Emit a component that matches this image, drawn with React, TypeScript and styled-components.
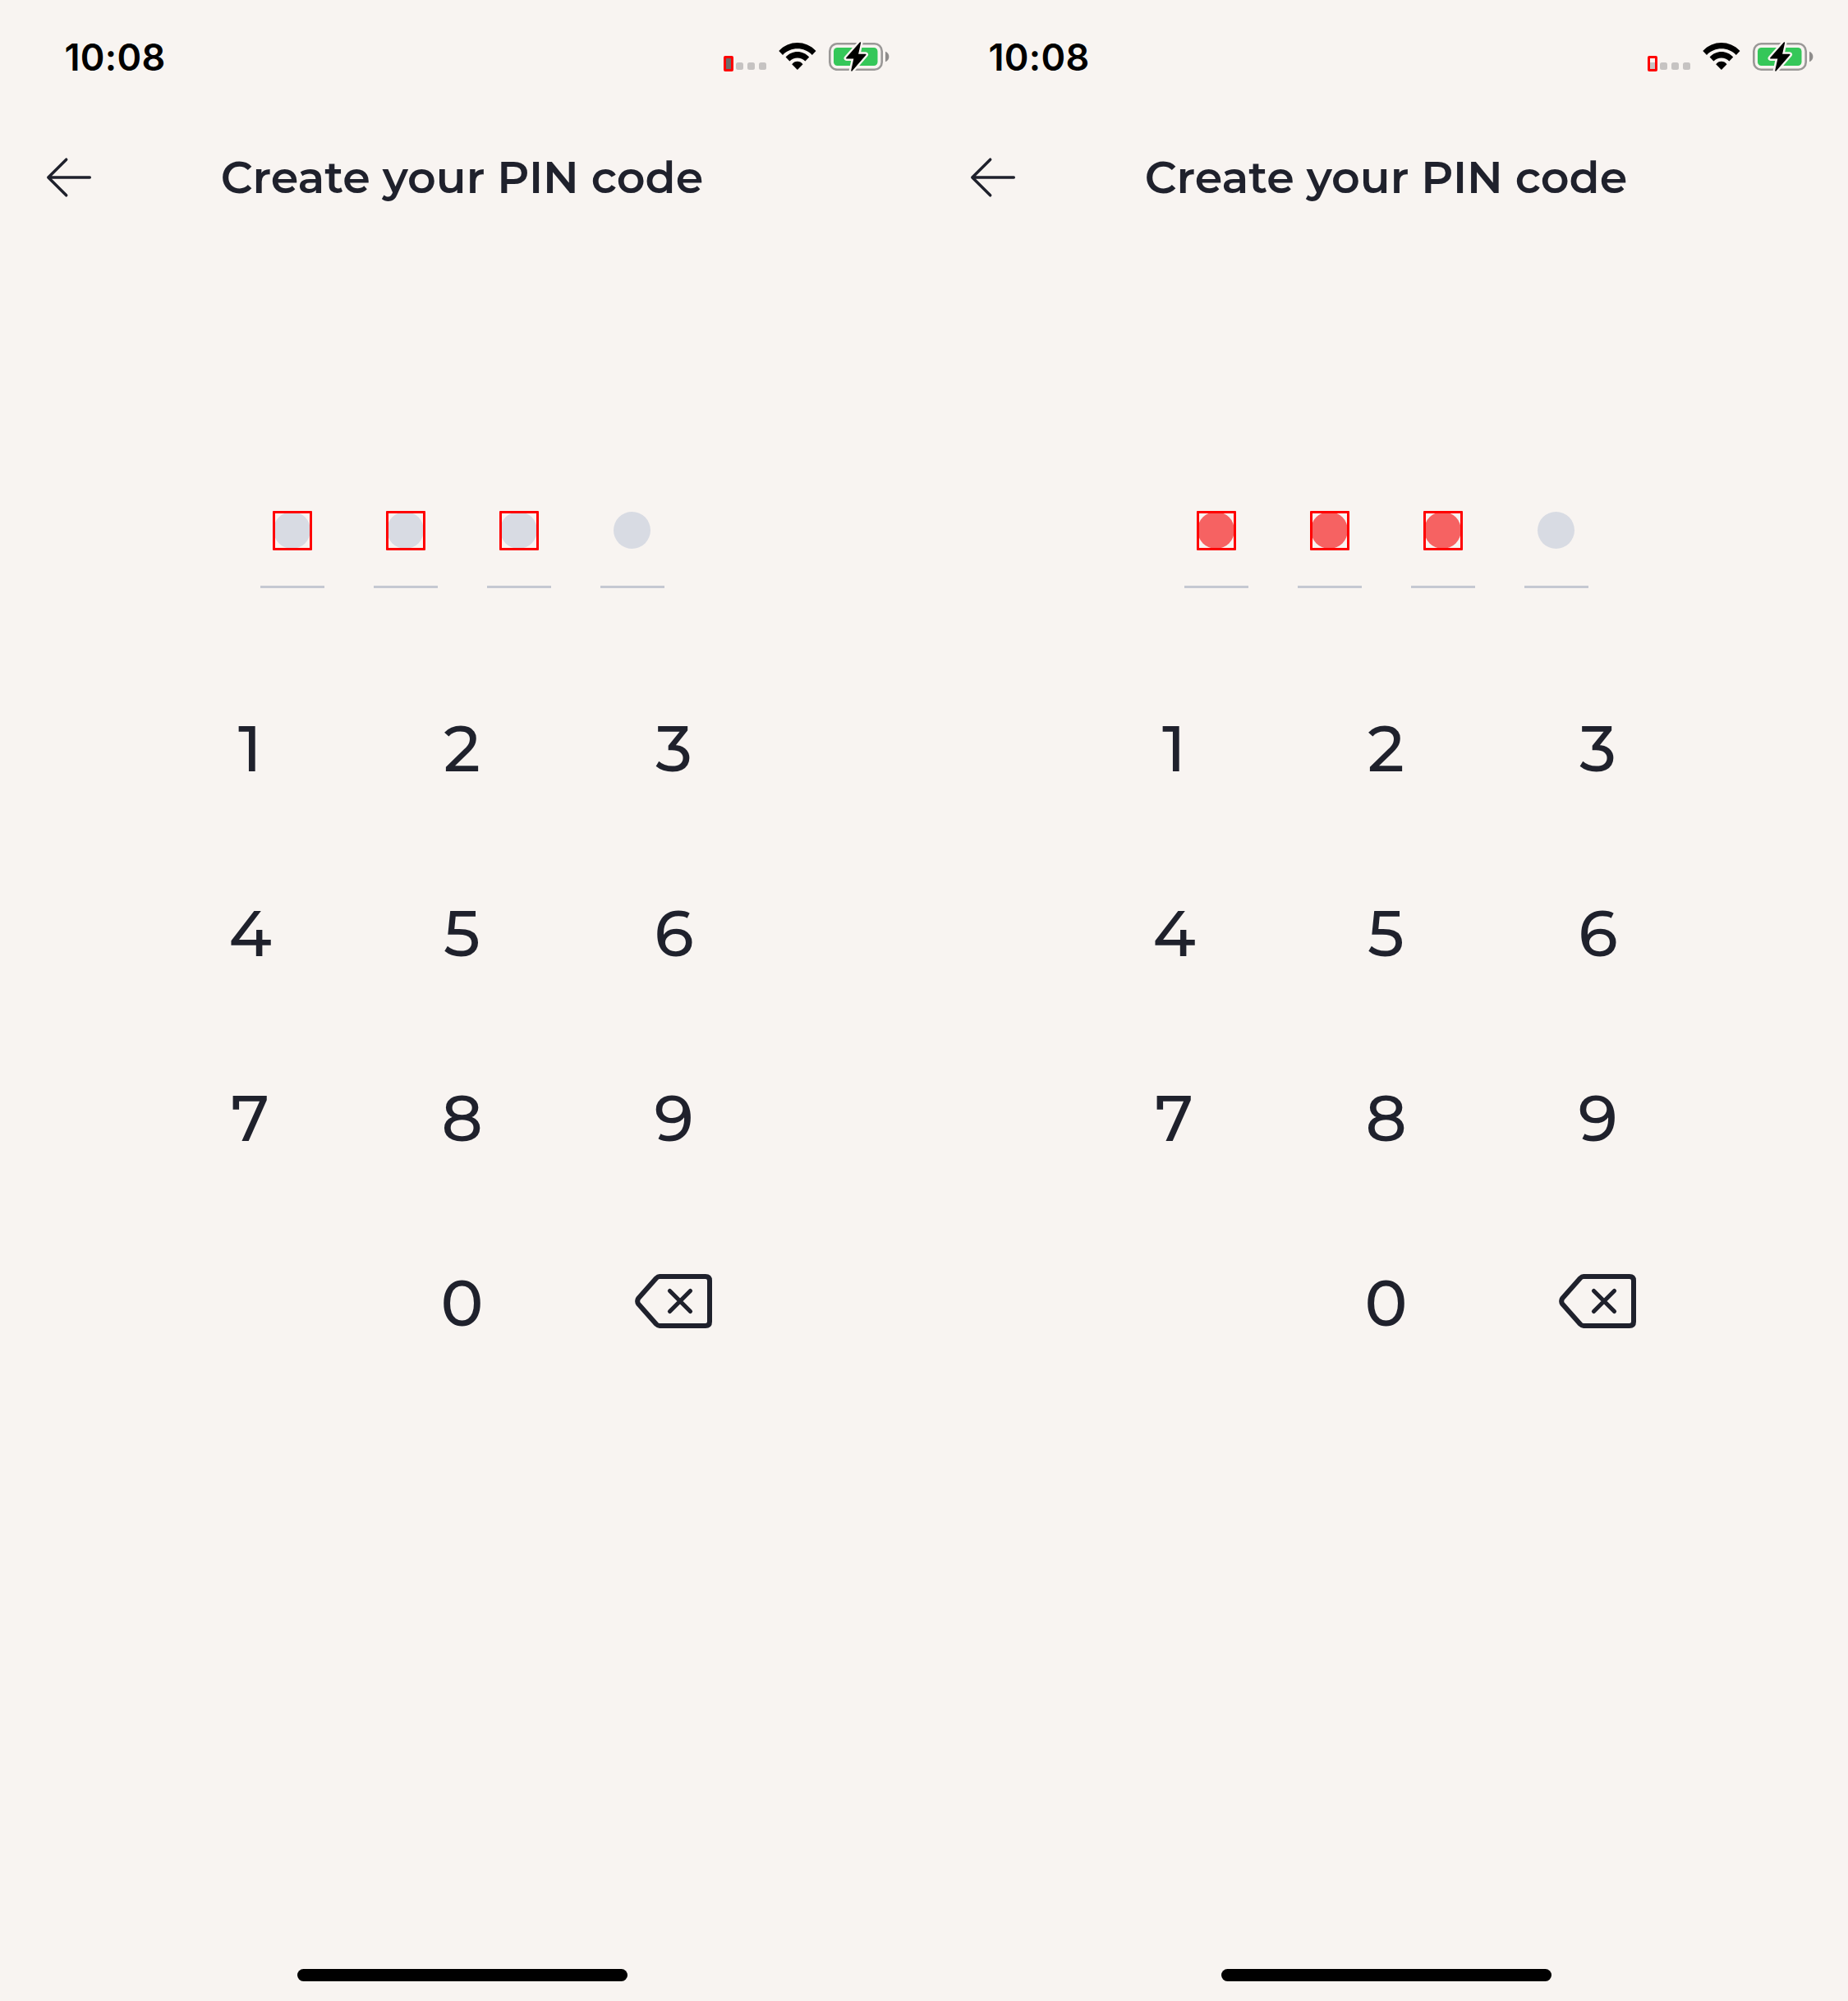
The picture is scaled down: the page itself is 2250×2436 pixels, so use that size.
import React from "react";
import styled, { createGlobalStyle } from "styled-components";

const GlobalStyle = createGlobalStyle`
  body { margin: 0; background: #f8f4f1; }
  * { box-sizing: border-box; }
`;

const ink = "#1f212c";

const Board = styled.main`
  display: grid;
  grid-template-columns: 1125px 1125px;
  width: 2250px;
  height: 2436px;
  background: #f8f4f1;
  color: ${ink};
  font-family: Montserrat, Inter, "Liberation Sans", sans-serif;
`;

const Screen = styled.section`
  display: flex;
  flex-direction: column;
  align-items: center;
  height: 2436px;
`;

const StatusBar = styled.header`
  display: flex;
  justify-content: space-between;
  width: 100%;
  height: 132px;
  padding: 47px 42px 0 78.5px;
`;

const Clock = styled.time`
  font: 600 45px/45px Inter, "Liberation Sans", sans-serif;
  letter-spacing: 0.3px;
  color: #000;
`;

const StatusIcons = styled.div`
  display: flex;
  gap: 15px;
  height: 44px;
`;

const TitleBar = styled.div`
  display: grid;
  grid-template-columns: 168px 1fr 168px;
  align-items: center;
  width: 100%;
  height: 168px;
`;

const BackButton = styled.button`
  display: flex;
  padding: 0 0 0 54px;
  border: 0;
  background: none;
  color: ${ink};
`;

const Title = styled.h1`
  margin: 0;
  font-size: 54px;
  line-height: 64px;
  font-weight: 600;
  text-align: center;
  white-space: nowrap;
`;

const PinRow = styled.div`
  display: flex;
  gap: 60px;
  margin: 322px 0 0 1px;
`;

const PinSlot = styled.div`
  position: relative;
  display: flex;
  justify-content: center;
  width: 78px;
  height: 94px;
  padding: 1px 1px 0 0;
  border-bottom: 3px solid #c5c8d2;
`;

const PinDot = styled.span<{ $alert: boolean }>`
  width: 45px;
  height: 45px;
  border-radius: 50%;
  background: ${(p) => (p.$alert ? "#f66262" : "#d8dbe3")};
`;

const PinMark = styled.span`
  position: absolute;
  top: 0;
  left: 15px;
  width: 48px;
  height: 48px;
  border: 3px solid #ff0000;
  border-radius: 1px;
`;

const Keypad = styled.div`
  display: grid;
  grid-template-columns: repeat(3, 258px);
  grid-auto-rows: 225px;
  margin-top: 83px;
`;

const Key = styled.button`
  display: flex;
  align-items: center;
  justify-content: center;
  padding: 0 0 2px;
  border: 0;
  background: none;
  color: ${ink};
  font: 500 78px/90px Montserrat, Inter, "Liberation Sans", sans-serif;
`;

const DeleteKey = styled(Key)`
  padding-bottom: 5px;
`;

const HomeIndicator = styled.div`
  width: 402px;
  height: 15px;
  margin: auto 0 24px 1px;
  border-radius: 8px;
  background: #000;
`;

const Signal = ({ alert }: { alert: boolean }) => (
  <svg width="52" height="44" viewBox="0 0 52 44">
    <rect x="2" y={alert ? 29 : 23} width="8" height={alert ? 9 : 15} fill={alert ? "#c6c3c2" : "#6d6b6a"} />
    <rect x="1.5" y="22.5" width="9" height="16" rx="0.5" fill="none" stroke="#f00" strokeWidth="3" />
    {[15, 29, 43].map((x) => (
      <rect key={x} x={x} y="29" width="9" height="9" rx="2.5" fill="#c6c3c2" />
    ))}
  </svg>
);

const Wifi = () => (
  <svg width="46" height="44" viewBox="0 0 46 44">
    <path d="M0.3 15 C12.5 1.7 33 1.7 45.5 15 L40.8 20 C31 9.8 14.8 9.8 5 20 Z" />
    <path d="M8.6 22.6 C16.2 13.8 29.6 13.8 37.2 22.6 L32.4 27.6 C27.2 22.2 18.6 22.2 13.4 27.6 Z" />
    <path d="M16.2 31.2 C19.5 26.6 26.2 26.6 29.5 31.2 L22.9 38 Z" />
  </svg>
);

const bolt = "M38.4 5 L21.8 23.8 H31.2 L27.9 39 L44.8 19.5 H35.2 Z";

const Battery = () => (
  <svg width="74" height="44" viewBox="0 0 74 44">
    <rect x="1.3" y="6.3" width="63.4" height="31.4" rx="9" fill="none" stroke="#9a9897" strokeWidth="2.6" />
    <rect x="6" y="11" width="53.5" height="22" rx="4.5" fill="#35c759" />
    <path d="M69 15.8 Q73.4 17.5 73.4 22 Q73.4 26.5 69 28.2 Z" fill="#8e8c8b" />
    <path d={bolt} fill="#f8f4f1" stroke="#f8f4f1" strokeWidth="6.4" strokeLinejoin="round" />
    <path d={bolt} fill="#000" stroke="#000" strokeWidth="1.4" strokeLinejoin="round" />
  </svg>
);

const BackArrow = () => (
  <svg width="60" height="54" viewBox="0 0 60 54" fill="none" stroke="currentColor" strokeWidth="3.5" strokeLinecap="round" strokeLinejoin="round">
    <path d="M26.7 5.2 L4.8 27 L26.7 48.8 M4.8 27 H55.3" />
  </svg>
);

const Backspace = () => (
  <svg width="95" height="66" viewBox="0 0 95 66" fill="none" stroke={ink} strokeLinecap="round" strokeLinejoin="round">
    <path d="M30 3 H86 Q91 3 91 8 V58 Q91 63 86 63 H30 Q28 63 26 61 L4.3 36.5 Q2 33 4.3 29.5 L26 5 Q28 3 30 3 Z" strokeWidth="6" />
    <path d="M42.5 20.5 L67.5 45.5 M67.5 20.5 L42.5 45.5" strokeWidth="5.2" />
  </svg>
);

const slots = [true, true, true, false];
const keys = ["1", "2", "3", "4", "5", "6", "7", "8", "9"];

const PinScreen = ({ alert }: { alert: boolean }) => (
  <Screen>
    <StatusBar>
      <Clock>10:08</Clock>
      <StatusIcons>
        <Signal alert={alert} />
        <Wifi />
        <Battery />
      </StatusIcons>
    </StatusBar>
    <TitleBar>
      <BackButton aria-label="Back"><BackArrow /></BackButton>
      <Title>Create your PIN code</Title>
    </TitleBar>
    <PinRow>
      {slots.map((filled, i) => (
        <PinSlot key={i}>
          <PinDot $alert={alert && filled} />
          {filled && <PinMark />}
        </PinSlot>
      ))}
    </PinRow>
    <Keypad>
      {keys.map((k) => <Key key={k}>{k}</Key>)}
      <span />
      <Key>0</Key>
      <DeleteKey aria-label="Delete"><Backspace /></DeleteKey>
    </Keypad>
    <HomeIndicator />
  </Screen>
);

export default function App() {
  return (
    <>
      <GlobalStyle />
      <Board>
        <PinScreen alert={false} />
        <PinScreen alert />
      </Board>
    </>
  );
}
